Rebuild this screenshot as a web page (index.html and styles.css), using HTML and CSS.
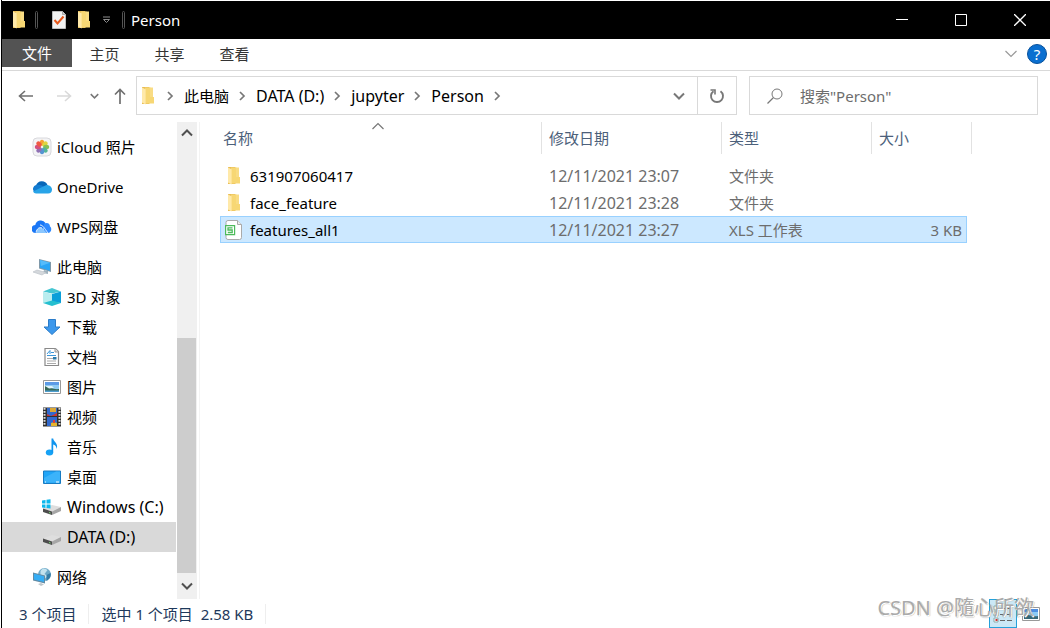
FILE: index.html
```html
<!DOCTYPE html>
<html lang="zh-CN">
<head>
<meta charset="utf-8">
<title>Person</title>
<link rel="stylesheet" href="styles.css">
</head>
<body>
<svg class="defs" aria-hidden="true">
  <symbol id="folder" viewBox="0 0 14 18">
    <path d="M1 0h7.500v17H1z" fill="#e9bd55"/>
    <path d="M4 0.500h5.500v9.500H13v6.500H4z" fill="#f7d774"/>
    <path d="M9 10V0.500h3V10z" fill="#f9dc84"/>
    <path d="M1 0.500l3.600 1.800V17.500L1 15.500z" fill="#ffe9a9"/>
  </symbol>
  <symbol id="chev-right" viewBox="0 0 8 10"><path d="M2 1l4 4-4 4" fill="none" stroke="#777" stroke-width="1.700"/></symbol>
  <symbol id="chev-down" viewBox="0 0 12 8"><path d="M1 1.500l5 5 5-5" fill="none" stroke="currentColor" stroke-width="2"/></symbol>
  <symbol id="chev-thin" viewBox="0 0 12 8"><path d="M0.500 1l5.500 5.500L11.500 1" fill="none" stroke="currentColor" stroke-width="1.200"/></symbol>
  <symbol id="drive" viewBox="0 0 20 20">
    <path d="M1 11.500l9-3.500 9 2-9 4.500z" fill="#dedede"/>
    <path d="M1 11.500l9 3V18l-9-3z" fill="#4d4d4d"/>
    <path d="M10 14.500l9-4.500v4l-9 4z" fill="#a6a6a6"/>
    <path d="M7 15.500l1.500.5" stroke="#7be07b"/>
  </symbol>
</svg>
<div class="window">
  <header class="titlebar">
    <svg class="folder"><use href="#folder"/></svg>
    <span class="bar"></span>
    <button class="quick" aria-label="属性"><svg width="14" height="18" viewBox="0 0 14 18"><path d="M.5.500h10l3 3v14H.5z" fill="#f2f2f2" stroke="#bdbdbd"/><path d="M10.500.500v3h3" fill="#ccc" stroke="#aaa"/><path d="M2.500 9l3 3.500 6-7" fill="none" stroke="#e8591c" stroke-width="2"/></svg></button>
    <button class="quick" aria-label="新建文件夹"><svg class="folder"><use href="#folder"/></svg></button>
    <button class="quick more" aria-label="自定义快速访问工具栏"><svg width="9" height="8" viewBox="0 0 9 8"><path d="M1 1h7M1.500 3.500h6l-3 3z" fill="none" stroke="#8c8c8c"/></svg></button>
    <span class="bar"></span>
    <h1>Person</h1>
    <div class="caption">
      <button aria-label="最小化"><svg width="12" height="12"><path d="M0 5.500h12" stroke="#fff"/></svg></button>
      <button aria-label="最大化"><svg width="12" height="12"><path d="M.5.500h11v11H.5z" fill="none" stroke="#fff"/></svg></button>
      <button aria-label="关闭"><svg width="12" height="12"><path d="M0 0l12 12M12 0L0 12" stroke="#fff" stroke-width="1.300"/></svg></button>
    </div>
  </header>

  <nav class="tabs">
    <button class="file">文件</button>
    <button>主页</button>
    <button>共享</button>
    <button>查看</button>
    <span class="grow"></span>
    <button class="expand" aria-label="展开功能区"><svg width="12" height="8"><use href="#chev-thin"/></svg></button>
    <button class="help" aria-label="帮助">?</button>
  </nav>

  <div class="location">
    <div class="arrows">
      <button aria-label="后退"><svg width="16" height="12"><path d="M7 1L1.500 6 7 11M1.500 6H15" fill="none" stroke="#707070" stroke-width="1.600"/></svg></button>
      <button aria-label="前进"><svg width="16" height="12"><path d="M9 1l5.500 5L9 11M14.500 6H1" fill="none" stroke="#d9d9d9" stroke-width="1.600"/></svg></button>
      <button class="recent" aria-label="最近位置"><svg width="9" height="6"><use href="#chev-down"/></svg></button>
      <button class="up" aria-label="上移"><svg width="12" height="16"><path d="M1 6.500L6 1.500l5 5M6 1.500V16" fill="none" stroke="#707070" stroke-width="1.700"/></svg></button>
    </div>
    <div class="address">
      <svg class="folder"><use href="#folder"/></svg>
      <svg class="chev"><use href="#chev-right"/></svg>
      <button>此电脑</button>
      <svg class="chev"><use href="#chev-right"/></svg>
      <button class="latin">DATA (D:)</button>
      <svg class="chev"><use href="#chev-right"/></svg>
      <button class="latin">jupyter</button>
      <svg class="chev"><use href="#chev-right"/></svg>
      <button class="latin">Person</button>
      <svg class="chev"><use href="#chev-right"/></svg>
      <span class="grow"></span>
      <button class="history" aria-label="以前的位置"><svg width="12" height="8"><use href="#chev-down"/></svg></button>
      <button class="refresh" aria-label="刷新"><svg width="16" height="16"><path d="M11.500 3.200A6 6 0 1 1 4.500 3.200" fill="none" stroke="#777" stroke-width="1.900"/><path d="M1.500 2H6v4.500" fill="none" stroke="#777" stroke-width="1.600"/></svg></button>
    </div>
    <label class="search">
      <svg width="16" height="16"><circle cx="10" cy="6" r="5" fill="none" stroke="#777"/><path d="M6.500 9.500L.5 15.500" stroke="#777" stroke-width="1.200"/></svg>
      <input type="text" placeholder="搜索&quot;Person&quot;" aria-label="搜索">
    </label>
  </div>

  <main>
    <aside>
      <ul class="tree">
        <li><svg class="icon"><rect x="1" y="1" width="18" height="18" rx="4" fill="#f4f4f6" stroke="#d8d8dc"/><g opacity=".9"><ellipse cx="10" cy="5.800" rx="2.200" ry="3" fill="#f79a1e"/><ellipse cx="10" cy="5.800" rx="2.200" ry="3" fill="#ddd22b" transform="rotate(45 10 10)"/><ellipse cx="10" cy="5.800" rx="2.200" ry="3" fill="#7dbb43" transform="rotate(90 10 10)"/><ellipse cx="10" cy="5.800" rx="2.200" ry="3" fill="#43b08e" transform="rotate(135 10 10)"/><ellipse cx="10" cy="5.800" rx="2.200" ry="3" fill="#458bd0" transform="rotate(180 10 10)"/><ellipse cx="10" cy="5.800" rx="2.200" ry="3" fill="#8663ad" transform="rotate(225 10 10)"/><ellipse cx="10" cy="5.800" rx="2.200" ry="3" fill="#d13f70" transform="rotate(270 10 10)"/><ellipse cx="10" cy="5.800" rx="2.200" ry="3" fill="#f04930" transform="rotate(315 10 10)"/></g></svg>iCloud 照片</li>
        <li><svg class="icon"><path d="M4 8.500a6.200 6.200 0 0 1 11.500-.5l-4 6z" fill="#0867b8"/><path d="M2 14.500A4 4 0 0 1 4 8c3-1 6 0 10 3l-2 4z" fill="#127bd1"/><path d="M1 14.500L14.500 8c3.500 0 5.500 2.300 5.500 4.700 0 2.300-1.500 3.800-4 3.800H4c-1.200 0-2.300-.8-3-2z" fill="#28a4e8"/></svg>OneDrive</li>
        <li><svg class="icon"><path d="M4 16a4 4 0 0 1-.7-8A5.600 5.600 0 0 1 13.500 6L10 16z" fill="#1976f5"/><path d="M12 6.500c4-1.500 6 .5 6 3 2.500 2 1 6.500-2 6.500h-4z" fill="#2e89ff"/><path d="M4 16c1-5.500 5-7.500 8-3l3 3z" fill="#8bc7ff"/><path d="M8 8c3 0 4 3 8 8M4 15.500c1-4 3-5.500 6-4.500" fill="none" stroke="#e5f3ff"/></svg>WPS网盘</li>
        <li class="root"><svg class="icon"><path d="M7 2l12 3v10L7 11.500z" fill="#7f99aa"/><path d="M8 3l10 2.700v8L8 10.700z" fill="#2aa5f5"/><path d="M8 3l10 2.700L9 9z" fill="#55bcfb"/><path d="M12 13l4 1v3l-5-1z" fill="#9fb2bd"/><path d="M1 15l4-2 9 2.500-4 2.500z" fill="#d4d8dc" stroke="#b7bec4" stroke-width=".6"/></svg>此电脑</li>
        <li class="child"><svg class="icon"><path d="M1 4.500l9-3.500 9 3.500-9 2z" fill="#45c6d2"/><path d="M1 4.500l9 2.500v8l-9 1z" fill="#b9edef"/><path d="M10 7l9-2.500V16l-9-1z" fill="#0b9fd9"/><path d="M1 16l9-2.500 9 2.500-9 3z" fill="#25bfcf"/></svg>3D 对象</li>
        <li class="child"><svg class="icon"><path d="M6.500 2.500h7V10H18l-8 7.500L2 10h4.500z" fill="#3c98ec" stroke="#2b7cc9"/></svg>下载</li>
        <li class="child"><svg class="icon"><path d="M3 1.500h10.500l3 3v14H3z" fill="#fff" stroke="#898989" stroke-width="1.200"/><path d="M13 1.500v3.500h3.500" fill="#ddd" stroke="#999"/><path d="M5 7l3-3.500V7M9 5.500h3M5 8.500h9" fill="none" stroke="#3b96d9"/><path d="M5 11.500h6M5 14h9M5 16.500h9" stroke="#aaa"/><path d="M11 10h3.500v2.500H11z" fill="#2878aa"/></svg>文档</li>
        <li class="child"><svg class="icon"><path d="M1.500 3.500h17v13h-17z" fill="#fff" stroke="#999"/><path d="M3 5h14v10H3z" fill="#8ecaf2"/><path d="M3 5h14v3H3z" fill="#5c9ae6"/><path d="M3 9c5 0 8 4 14 3v3H3z" fill="#376957"/><path d="M3 9h7l2 2-5 .5z" fill="#e1f2fa"/><path d="M3 13.500h14V15H3z" fill="#4f9fd0"/></svg>图片</li>
        <li class="child"><svg class="icon"><path d="M1 0.500h18v19H1z" fill="#303030"/><path d="M2.500 1v18M17.500 1v18" stroke="#ddd" stroke-width="2" stroke-dasharray="1.800 1.200"/><path d="M5 1h10v8H5zM5 10h10v9H5z" fill="#3169cd"/><path d="M8 1h6v4H8z" fill="#dba735"/><path d="M5 7l4 2 6-3v3H5z" fill="#cc3430"/><path d="M9 16l3-1 3 1v3H9z" fill="#e4b42d"/><path d="M11 13h2v3h-2z" fill="#db413a"/></svg>视频</li>
        <li class="child"><svg class="icon"><ellipse cx="7.500" cy="15.500" rx="3.700" ry="2.900" fill="#16a2f5"/><path d="M9.500 1.500h1.700c.3 3.500 5.300 4.500 3.600 10.500-.6-3-1.800-4-3.600-4.500v8H9.500z" fill="#1195ee"/></svg>音乐</li>
        <li class="child"><svg class="icon"><path d="M1.500 4h17v12.500h-17z" fill="#20a5f7" stroke="#187bc2"/><path d="M2 11L14 4.500h4v11H2z" fill="#3cb3fa"/><path d="M3 15h1M14 15h3" stroke="#fff"/></svg>桌面</li>
        <li class="child"><svg class="icon"><use href="#drive"/><path d="M0 3.500l3.500-.5v3.500H0zM4.500 2.800l4-.5v4.200h-4zM0 7.500h3.500V11L0 10.500zM4.500 7.500h4v4l-4-.4z" fill="#0bb7ec"/></svg><span class="latin">Windows (C:)</span></li>
        <li class="child selected"><svg class="icon"><use href="#drive"/></svg><span class="latin">DATA (D:)</span></li>
        <li class="net"><svg class="icon"><circle cx="12.500" cy="7.500" r="6.500" fill="#6da9c8"/><path d="M8.500 4c3-4 5-2 7-1l-3 4 3 2-3 3c-2-1-2-3-4-4z" fill="#c3e2ee"/><path d="M14.500 8l4-2c1 3-1 6-4 8z" fill="#347ba5"/><path d="M1 5.500l12 3v8l-12-3z" fill="#628ba4"/><path d="M2 6.700l10 2.600V15L2 12.600z" fill="#35adf5"/><path d="M6 17l3-1 3 1.500-3 1.500z" fill="#bec6cb"/></svg>网络</li>
      </ul>
      <div class="scroll">
        <button aria-label="向上滚动"><svg class="flip" width="12" height="8"><use href="#chev-down"/></svg></button>
        <span class="track"></span>
        <span class="thumb"></span>
        <button aria-label="向下滚动"><svg width="12" height="8"><use href="#chev-down"/></svg></button>
      </div>
    </aside>
    <section class="files">
      <table>
        <colgroup><col class="c-name"><col class="c-date"><col class="c-type"><col class="c-size"><col class="c-end"></colgroup>
        <thead>
          <tr><th>名称<svg class="sort flip" width="12" height="8"><use href="#chev-thin"/></svg></th><th>修改日期</th><th>类型</th><th colspan="2">大小</th></tr>
        </thead>
        <tbody>
          <tr><td><div class="name"><svg class="folder"><use href="#folder"/></svg>631907060417</div></td><td class="latin">12/11/2021 23:07</td><td>文件夹</td><td></td></tr>
          <tr><td><div class="name"><svg class="folder"><use href="#folder"/></svg>face_feature</div></td><td class="latin">12/11/2021 23:28</td><td>文件夹</td><td></td></tr>
          <tr class="selected"><td><div class="name"><svg class="sheet" viewBox="0 0 18 20"><path d="M3 .5h9.500l4 4v13a2 2 0 0 1-2 2H3a2 2 0 0 1-2-2v-15a2 2 0 0 1 2-2z" fill="#fff" stroke="#aaa"/><path d="M12.500.5v4h4" fill="#ededed" stroke="#aaa"/><path d="M.6 5.600h9v9h-9z" fill="#fff" stroke="#4dbb5b" stroke-width="1.200"/><path d="M7.500 7.800H3v2.200h4.200v2.500H2.800" fill="none" stroke="#4dbb5b" stroke-width="1.300"/></svg>features_all1</div></td><td class="latin">12/11/2021 23:27</td><td>XLS 工作表</td><td>3 KB</td></tr>
        </tbody>
      </table>
    </section>
  </main>

  <footer>
    <span class="count">3 个项目</span>
    <span class="picked">选中 1 个项目&nbsp; 2.58 KB</span>
    <span class="grow"></span>
    <button class="details" aria-label="详细信息"><svg width="20" height="18"><path d="M1 1h4v4H1zM1 7h4v4H1zM1 13h4v4H1z" fill="#fff" stroke="#8aa"/><path d="M2.500 14h2v2h-2z" fill="#c33"/><path d="M7 3.500h5M14 3.500h5M7 9.500h5M14 9.500h5M7 15.500h5M14 15.500h5" stroke="#666"/></svg></button>
    <button class="thumbs" aria-label="大图标"><svg width="18" height="14"><path d="M.5.500h17v13H.5z" fill="#fff" stroke="#999"/><path d="M2 2h14v10H2z" fill="#8ccbf5"/><path d="M2 2h14v3H2z" fill="#4d8ee0"/><path d="M2 8c5-1 8 2 14 1v3H2z" fill="#356878"/></svg></button>
    <span class="mark">CSDN @隨心所欲</span>
  </footer>
</div>
</body>
</html>
```
FILE: styles.css
```css
* { box-sizing: border-box; }
body {
  margin: 0;
  background: #fff;
  color: #000;
  font: 15px/20px "Noto Sans", "Noto Sans CJK SC", sans-serif;
}
button {
  display: flex;
  align-items: center;
  justify-content: center;
  padding: 0;
  border: 0;
  background: none;
  color: inherit;
  font: inherit;
}
svg { display: block; flex: none; }
.latin { font-size: 16px; }
.defs { position: absolute; width: 0; height: 0; }
.grow { flex: 1; }
.flip { transform: rotate(180deg); }
.folder { width: 14px; height: 18px; }
.icon { width: 20px; height: 20px; }

.window {
  display: flex;
  flex-direction: column;
  min-height: 100vh;
  margin-left: 1px;
  padding-top: 1px;
  border-left: 1px solid #000;
}

.titlebar {
  display: flex;
  align-items: center;
  height: 38px;
  padding: 0 1px 0 10px;
  background: #000;
  color: #fff;
}
.titlebar h1 { margin: 0 0 0 6px; font-size: 15px; font-weight: 400; }
.bar { width: 3px; height: 18px; margin-left: 9px; border: 1px solid #555; border-radius: 2px; }
.quick { margin-left: 11px; }
.bar + .quick { margin-left: 14px; }
.more + .bar { margin-left: 11px; }
.caption { display: flex; margin-left: auto; }
.caption button { width: 59px; height: 38px; }

.tabs {
  display: flex;
  height: 32px;
  border-bottom: 1px solid #d9d9d9;
  color: #333;
}
.tabs button { width: 65px; height: 30px; }
.tabs .file { width: 70px; height: 28px; background: #535353; color: #fff; }
.tabs .expand { width: 24px; color: #999; }
.tabs .help {
  width: 20px;
  height: 20px;
  margin: 5px 3px 0 4px;
  border: 1px solid #07509b;
  border-radius: 50%;
  background: #0a6fd0;
  color: #fff;
}

.location { display: flex; height: 51px; padding: 5px 12px 7px 0; }
.arrows { display: flex; align-items: center; width: 134px; padding-left: 16px; }
.arrows button { width: 16px; margin-right: 22px; }
.arrows button + button { margin-right: 14px; }
.arrows button.recent { margin-right: 10px; color: #777; }
.arrows button.up { margin-right: 0; }
.address {
  display: flex;
  flex: 561 1 0;
  align-items: center;
  border: 1px solid #d9d9d9;
}
.address .folder { margin: 0 2px 0 4px; }
.chev { width: 8px; height: 10px; margin: 0 10px 0 9px; }
.address .history { width: 36px; height: 37px; color: #777; }
.address .refresh { width: 39px; height: 37px; border-left: 1px solid #d9d9d9; }
.search {
  display: flex;
  flex: 270 1 0;
  align-items: center;
  max-width: 289px;
  margin-left: 12px;
  padding-left: 17px;
  border: 1px solid #d9d9d9;
}
.search input {
  flex: 1;
  min-width: 0;
  margin-left: 17px;
  padding: 0;
  border: 0;
  outline: 0;
  background: none;
  font: inherit;
}
.search input::placeholder { color: #6d6d6d; opacity: 1; }

main { display: flex; flex: 1; }
aside { display: flex; width: 198px; border-right: 1px solid #f3f3f3; }
.tree { flex: 1; margin: 0; padding: 10px 1px 7px 0; list-style: none; }
.tree li {
  display: flex;
  align-items: center;
  gap: 5px;
  height: 30px;
  margin-bottom: 10px;
  padding-left: 30px;
  white-space: nowrap;
}
.tree .root { margin-bottom: 0; }
.tree .child { margin-bottom: 0; padding-left: 40px; }
.tree .selected { background: #d9d9d9; }
.tree .net { margin: 10px 0 0; }
.scroll {
  display: flex;
  flex-direction: column;
  width: 20px;
  margin-right: 2px;
  background: #f0f0f0;
  color: #505050;
}
.scroll button { height: 22px; }
.scroll button:last-child { height: 26px; }
.track { flex: 194; }
.thumb { flex: 235; width: 19px; background: #cdcdcd; }

.files { flex: 1; padding-left: 20px; }
table { width: 752px; table-layout: fixed; border-collapse: separate; border-spacing: 0; }
.c-name { width: 322px; }
.c-date { width: 180px; }
.c-type { width: 150px; }
.c-size { width: 95px; }
.c-end { width: 5px; }
th {
  position: relative;
  height: 32px;
  padding: 0 0 0 7px;
  border-right: 1px solid #e2e2e2;
  color: #4c607a;
  font-weight: 400;
  text-align: left;
}
th:first-child { padding-left: 3px; }
.sort { position: absolute; top: 0; left: 152px; width: 12px; color: #777; }
thead::after { content: ""; display: block; height: 8px; }
td { height: 27px; padding: 0 0 0 7px; color: #6d6d6d; }
td:first-child { padding-left: 7px; color: #000; }
td:nth-child(4) { padding-right: 4px; text-align: right; }
.name { display: flex; align-items: center; gap: 9px; }
.sheet { width: 18px; height: 20px; margin: 0 -2px; }
.selected td { border: solid #99d1ff; border-width: 1px 0; background: #cce8ff; }
.selected td:first-child { padding-left: 6px; border-left-width: 1px; }
.selected td:last-child { border-right-width: 1px; }

footer {
  position: relative;
  display: flex;
  align-items: center;
  height: 29px;
  padding-right: 10px;
  color: #1e395b;
}
.count { padding: 0 12px 0 17px; border-right: 1px solid #eee; }
.picked { padding: 0 12px; border-right: 1px solid #eee; }
.details { width: 28px; height: 29px; border: 1px solid #26a0da; background: #cbe8f6; }
.thumbs { margin-left: 5px; }
.mark {
  position: absolute;
  right: 16px;
  bottom: 8px;
  color: #aaa;
  font-size: 20px;
  line-height: 24px;
  text-shadow: 1px 1px 0 #fff, 1px 1px 1px #777;
}
```
